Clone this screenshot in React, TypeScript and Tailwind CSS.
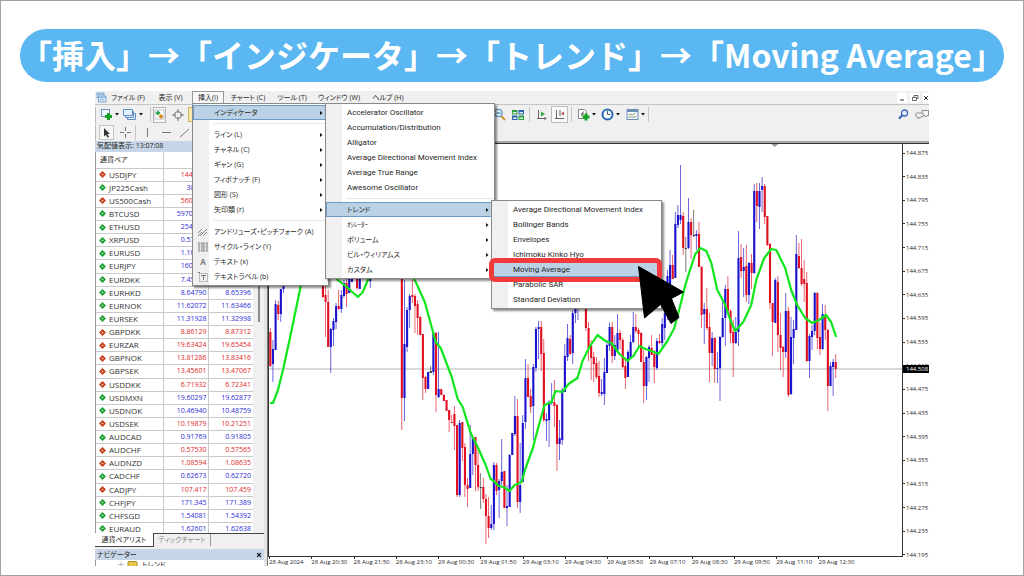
import React from 'react';
import { X } from 'lucide-react';

interface Quote {
  symbol: string;
  bid: string;
  ask: string;
  up: boolean;
}

interface MenuEntry {
  label: string;
  arrow?: boolean;
  active?: boolean;
  icon?: React.ReactNode;
  submenu?: React.ReactNode;
}

const quotes: Quote[] = [
  { symbol: 'USDJPY', bid: '144.508', ask: '144.524', up: false },
  { symbol: 'JP225Cash', bid: '38190', ask: '38200', up: true },
  { symbol: 'US500Cash', bid: '5600.10', ask: '5600.80', up: false },
  { symbol: 'BTCUSD', bid: '59702.10', ask: '59760.20', up: true },
  { symbol: 'ETHUSD', bid: '2540.10', ask: '2543.60', up: true },
  { symbol: 'XRPUSD', bid: '0.57120', ask: '0.57410', up: true },
  { symbol: 'EURUSD', bid: '1.10890', ask: '1.10907', up: true },
  { symbol: 'EURJPY', bid: '160.230', ask: '160.254', up: true },
  { symbol: 'EURDKK', bid: '7.45210', ask: '7.46240', up: true },
  { symbol: 'EURHKD', bid: '8.64790', ask: '8.65396', up: true },
  { symbol: 'EURNOK', bid: '11.62072', ask: '11.63466', up: true },
  { symbol: 'EURSEK', bid: '11.31928', ask: '11.32998', up: true },
  { symbol: 'GBPDKK', bid: '8.86129', ask: '8.87312', up: false },
  { symbol: 'EURZAR', bid: '19.63424', ask: '19.65454', up: false },
  { symbol: 'GBPNOK', bid: '13.81286', ask: '13.83416', up: false },
  { symbol: 'GBPSEK', bid: '13.45601', ask: '13.47067', up: false },
  { symbol: 'USDDKK', bid: '6.71932', ask: '6.72341', up: false },
  { symbol: 'USDMXN', bid: '19.60297', ask: '19.62877', up: true },
  { symbol: 'USDNOK', bid: '10.46940', ask: '10.48759', up: true },
  { symbol: 'USDSEK', bid: '10.19879', ask: '10.21251', up: false },
  { symbol: 'AUDCAD', bid: '0.91769', ask: '0.91805', up: true },
  { symbol: 'AUDCHF', bid: '0.57530', ask: '0.57565', up: false },
  { symbol: 'AUDNZD', bid: '1.08594', ask: '1.08635', up: false },
  { symbol: 'CADCHF', bid: '0.62673', ask: '0.62720', up: true },
  { symbol: 'CADJPY', bid: '107.417', ask: '107.459', up: false },
  { symbol: 'CHFJPY', bid: '171.345', ask: '171.389', up: true },
  { symbol: 'CHFSGD', bid: '1.54081', ask: '1.54392', up: true },
  { symbol: 'EURAUD', bid: '1.62601', ask: '1.62638', up: true },
];

const prices = [
  '144.875', '144.835', '144.795', '144.755', '144.715', '144.675', '144.635', '144.595', '144.555',
  '144.515', '144.475', '144.435', '144.395', '144.355', '144.315', '144.275', '144.235', '144.195',
];

const times = [
  '28 Aug 2024', '28 Aug 20:30', '28 Aug 21:50', '28 Aug 23:10', '29 Aug 00:30', '29 Aug 01:50', '29 Aug 03:10',
  '29 Aug 04:30', '29 Aug 05:50', '29 Aug 07:10', '29 Aug 08:30', '29 Aug 09:50', '29 Aug 11:10', '29 Aug 12:30',
];

// bar index, high, body top, body bottom, low, colour (r = down, b = up, k = flat)
type Candle = [number, number, number, number, number, 'r' | 'b' | 'k'];

const candles: Candle[] = [
  [0, 328, 332, 366, 367, 'r'], [1, 340, 349, 364, 382, 'b'], [2, 300, 304, 350, 350, 'b'], [3, 301, 305, 314, 320, 'r'],
  [4, 289, 289, 314, 322, 'b'], [5, 270, 280, 289, 293, 'b'],
  [20, 270, 270, 297, 298, 'r'], [21, 286, 295, 302, 337, 'r'], [22, 290, 302, 347, 347, 'r'], [23, 328, 329, 347, 373, 'b'],
  [24, 318, 321, 330, 346, 'b'], [25, 303, 306, 322, 329, 'b'], [26, 290, 306, 309, 310, 'r'], [27, 290, 295, 309, 313, 'b'],
  [28, 280, 283, 296, 298, 'b'], [29, 278, 283, 294, 307, 'r'], [30, 270, 275, 293, 293, 'b'], [31, 268, 270, 282, 282, 'b'],
  [33, 270, 270, 288, 290, 'r'], [34, 270, 275, 289, 289, 'b'], [38, 268, 270, 281, 288, 'b'], [50, 268, 270, 398, 430, 'r'],
  [51, 280, 344, 398, 421, 'b'], [52, 307, 310, 347, 352, 'b'], [53, 294, 296, 310, 328, 'b'], [54, 280, 295, 297, 303, 'r'],
  [55, 294, 296, 306, 333, 'r'], [56, 300, 304, 318, 335, 'r'], [57, 316, 317, 335, 335, 'r'], [58, 334, 334, 378, 400, 'r'],
  [59, 376, 377, 389, 393, 'r'], [60, 372, 372, 389, 389, 'b'], [61, 366, 371, 373, 373, 'k'], [62, 332, 333, 372, 375, 'b'],
  [63, 332, 333, 395, 412, 'r'], [64, 332, 389, 397, 398, 'b'], [65, 389, 389, 395, 395, 'r'], [66, 394, 395, 401, 401, 'r'],
  [67, 400, 400, 411, 411, 'r'], [68, 410, 410, 420, 432, 'r'], [69, 415, 422, 423, 423, 'r'], [70, 406, 414, 426, 450, 'r'],
  [71, 425, 425, 495, 497, 'r'], [72, 420, 423, 495, 497, 'b'], [73, 422, 422, 448, 461, 'r'], [74, 443, 447, 485, 497, 'r'],
  [75, 478, 485, 489, 507, 'r'], [76, 425, 454, 488, 488, 'b'], [77, 436, 437, 454, 475, 'b'], [78, 437, 437, 465, 491, 'r'],
  [79, 450, 465, 487, 491, 'r'], [80, 473, 487, 488, 509, 'k'], [81, 478, 487, 499, 503, 'r'], [82, 494, 499, 516, 544, 'r'],
  [83, 497, 516, 528, 538, 'r'], [84, 505, 524, 528, 530, 'b'], [85, 462, 465, 524, 530, 'b'], [86, 463, 465, 491, 495, 'r'],
  [87, 479, 481, 490, 518, 'b'], [88, 439, 472, 481, 485, 'b'], [89, 471, 471, 508, 508, 'r'], [90, 485, 506, 508, 526, 'b'],
  [91, 454, 455, 507, 507, 'b'], [92, 433, 433, 455, 455, 'b'], [93, 396, 416, 434, 436, 'b'], [94, 399, 416, 502, 508, 'r'],
  [95, 443, 485, 502, 513, 'b'], [96, 415, 423, 482, 482, 'b'], [97, 359, 378, 422, 429, 'b'], [98, 364, 378, 397, 397, 'r'],
  [99, 389, 396, 407, 413, 'r'], [100, 364, 367, 406, 440, 'b'], [101, 327, 329, 368, 372, 'b'], [102, 321, 327, 329, 359, 'b'],
  [103, 321, 327, 354, 371, 'r'], [104, 339, 353, 420, 422, 'r'], [105, 413, 419, 421, 441, 'b'], [106, 400, 402, 420, 447, 'b'],
  [107, 383, 401, 403, 405, 'b'], [108, 380, 402, 406, 427, 'r'], [109, 404, 405, 444, 471, 'r'], [110, 420, 438, 444, 460, 'b'],
  [111, 388, 390, 440, 445, 'b'], [112, 344, 356, 392, 392, 'b'], [113, 324, 338, 357, 361, 'b'], [114, 335, 339, 354, 355, 'r'],
  [115, 310, 313, 353, 364, 'b'], [116, 302, 308, 313, 323, 'b'], [117, 298, 300, 308, 320, 'b'], [120, 298, 300, 328, 331, 'r'],
  [121, 322, 328, 348, 361, 'r'], [122, 340, 346, 358, 380, 'r'], [123, 352, 357, 364, 382, 'r'], [124, 357, 363, 377, 379, 'r'],
  [125, 361, 376, 393, 397, 'r'], [126, 379, 392, 394, 396, 'b'], [127, 358, 372, 394, 405, 'b'], [128, 340, 345, 373, 373, 'b'],
  [129, 323, 327, 346, 351, 'b'], [130, 322, 327, 356, 363, 'r'], [131, 335, 345, 356, 360, 'b'], [132, 314, 333, 350, 351, 'b'],
  [133, 330, 333, 340, 349, 'r'], [134, 338, 340, 367, 368, 'r'], [135, 357, 366, 378, 389, 'r'], [136, 350, 352, 377, 377, 'b'],
  [137, 335, 342, 358, 358, 'b'], [138, 312, 327, 342, 343, 'b'], [139, 314, 327, 331, 333, 'r'], [140, 328, 330, 334, 349, 'r'],
  [141, 332, 333, 362, 362, 'r'], [142, 350, 362, 386, 403, 'r'], [143, 356, 357, 386, 400, 'b'], [144, 345, 347, 358, 382, 'b'],
  [145, 335, 348, 355, 355, 'r'], [146, 350, 354, 367, 383, 'r'], [147, 338, 341, 368, 370, 'b'], [148, 334, 341, 343, 344, 'r'],
  [149, 318, 324, 343, 347, 'b'], [150, 310, 313, 328, 340, 'b'], [151, 270, 276, 315, 320, 'b'], [152, 250, 265, 286, 290, 'b'],
  [153, 255, 265, 279, 279, 'r'], [154, 212, 224, 278, 278, 'b'], [155, 205, 215, 225, 228, 'b'], [156, 165, 215, 220, 224, 'b'],
  [157, 212, 216, 248, 255, 'r'], [158, 237, 248, 249, 272, 'k'], [159, 198, 222, 248, 249, 'b'], [160, 218, 222, 235, 259, 'r'],
  [161, 210, 235, 236, 237, 'k'], [162, 230, 234, 236, 250, 'b'], [163, 222, 234, 267, 267, 'r'], [164, 266, 267, 315, 328, 'r'],
  [165, 303, 309, 314, 344, 'b'], [166, 288, 309, 328, 330, 'r'], [167, 313, 327, 353, 382, 'r'], [168, 332, 338, 353, 366, 'b'],
  [169, 337, 338, 369, 383, 'r'], [170, 352, 368, 369, 383, 'b'], [171, 336, 337, 368, 401, 'b'], [172, 300, 318, 337, 338, 'b'],
  [173, 285, 289, 318, 346, 'b'], [174, 276, 289, 311, 312, 'r'], [175, 309, 311, 333, 343, 'r'], [176, 320, 332, 343, 377, 'r'],
  [177, 317, 332, 343, 344, 'b'], [178, 231, 258, 332, 346, 'b'], [179, 244, 257, 271, 278, 'r'], [180, 248, 267, 271, 297, 'b'],
  [181, 245, 266, 295, 302, 'r'], [182, 262, 263, 295, 304, 'b'], [183, 254, 263, 273, 289, 'r'], [184, 184, 191, 273, 274, 'b'],
  [185, 183, 191, 206, 222, 'r'], [186, 183, 191, 207, 229, 'b'], [187, 177, 186, 190, 212, 'b'], [188, 184, 186, 217, 224, 'r'],
  [189, 216, 216, 245, 246, 'r'], [190, 243, 244, 303, 309, 'r'], [191, 303, 303, 322, 356, 'r'], [192, 278, 280, 323, 323, 'b'],
  [193, 276, 282, 335, 352, 'r'], [194, 313, 335, 348, 370, 'r'], [195, 346, 347, 352, 377, 'r'], [196, 293, 311, 352, 358, 'b'],
  [197, 307, 311, 395, 397, 'r'], [198, 317, 337, 394, 395, 'b'], [199, 320, 329, 338, 364, 'b'], [200, 235, 254, 330, 330, 'b'],
  [201, 243, 256, 268, 269, 'r'], [202, 239, 268, 284, 286, 'r'], [203, 260, 279, 284, 302, 'r'], [204, 272, 283, 361, 362, 'r'],
  [205, 334, 336, 361, 378, 'b'], [206, 325, 331, 337, 350, 'b'], [207, 292, 293, 331, 335, 'b'], [208, 292, 293, 338, 349, 'r'],
  [209, 322, 337, 349, 355, 'r'], [210, 304, 314, 349, 350, 'b'], [211, 305, 315, 330, 340, 'r'], [212, 329, 330, 386, 411, 'r'],
  [213, 362, 366, 386, 386, 'b'], [214, 359, 362, 367, 396, 'b'], [215, 354, 362, 369, 378, 'r'],
];

const candleColor = { r: '#e01020', b: '#1a12cc', k: '#333333' };

const movingAverage =
  '270,403 273,403 278,390 283,370 290,338 301,285 308,255 320,250 330,270 338,280 348,288 358,297 363,292 368,280 372,270 385,240 400,255 409,270 416,282 425,302 436,342 441,348 452,377 458,399 463,407 471,433 478,447 486,465 491,479 494,481 499,486 504,487 510,491 515,485 522,482 526,468 533,449 538,430 545,405 552,402 556,391 563,392 569,384 578,378 583,361 590,347 598,335 606,341 612,343 620,354 628,361 634,356 640,346 646,349 652,351 659,354 668,341 675,328 681,305 686,285 690,272 696,254 701,248 707,251 712,263 718,290 726,305 731,320 736,331 744,322 752,305 757,280 765,258 772,249 777,250 786,268 792,290 798,305 806,318 813,323 820,320 827,315 832,322 837,337';

function Chart() {
  return (
    <svg className="block h-[412px] w-full" viewBox="269 144 634 412" preserveAspectRatio="none" aria-label="USDJPY">
      <line x1="269" x2="903" y1="369" y2="369" stroke="#b4b4b4" strokeWidth="1" />
      <path d="M772 144h7l-3.500 3z" fill="#999" />
      {candles.map(([i, high, top, bottom, low, c]) => {
        const x = 270.3 + i * 2.634;
        return (
          <g key={i} fill={candleColor[c]}>
            <rect x={x - 0.4} y={high} width={0.8} height={Math.max(low - high, 1)} opacity={0.8} />
            <rect x={x - 1} y={top} width={2.1} height={Math.max(bottom - top, 1)} />
          </g>
        );
      })}
      <polyline points={movingAverage} fill="none" stroke="#10e61c" strokeWidth="2.2" strokeLinejoin="round" />
    </svg>
  );
}

const isLatin = (text: string) => /^[\x20-\x7e]+$/.test(text);

function Menu({ groups, className }: { groups: MenuEntry[][]; className: string }) {
  return (
    <ul
      role="menu"
      className={`absolute z-10 border border-[#8a8a8a] bg-[linear-gradient(to_right,#f0f0f0_16px,#ffffff_16px)] py-px shadow-[2px_2px_2px_rgba(0,0,0,0.45)] ${className}`}
    >
      {groups.map((group, g) => (
        <React.Fragment key={g}>
          {g > 0 && (
            <li role="separator" className="flex h-[7px] items-center pl-5">
              <span className="h-px w-full bg-[#e6e6e6]" />
            </li>
          )}
          {group.map((entry) => (
            <li key={entry.label} role="none" className="relative">
              <button
                role="menuitem"
                className={`flex h-[15px] w-full items-center border text-left whitespace-nowrap ${
                  entry.active ? 'border-[#6b9ac4] bg-[#bbd2e6]' : 'border-transparent'
                }`}
              >
                <span className="flex w-[20px] shrink-0 pl-1">{entry.icon}</span>
                <span className={`flex-1 ${isLatin(entry.label) ? "font-['Roboto',sans-serif] text-[8px]" : ''}`}>
                  {entry.label}
                </span>
                {entry.arrow && (
                  <svg className="mr-[4px] h-[4px] w-[3px]" viewBox="0 0 3 4">
                    <path d="M0 0l2.500 2-2.500 2z" fill="#111" />
                  </svg>
                )}
              </button>
              {entry.submenu}
            </li>
          ))}
        </React.Fragment>
      ))}
    </ul>
  );
}

const trendMenu = (
  <Menu
    className="-top-[2px] left-[165px] w-[171px]"
    groups={[
      [
        { label: 'Average Directional Movement Index' },
        { label: 'Bollinger Bands' },
        { label: 'Envelopes' },
        { label: 'Ichimoku Kinko Hyo' },
        { label: 'Moving Average', active: true, submenu: <Highlight /> },
        { label: 'Parabolic SAR' },
        { label: 'Standard Deviation' },
      ],
    ]}
  />
);

function Highlight() {
  return (
    <>
      <span className="pointer-events-none absolute -top-[4px] -right-px -left-[3px] z-20 h-[24px] rounded-md border-[5px] border-[#f23a3a]" />
      <svg className="pointer-events-none absolute top-[3px] left-[145px] z-30 h-[60px] w-[48px]" viewBox="637 265 48 60">
        <path
          d="M638.500 266.500L683.500 292 671.500 298.500 679 317.500 671 323.500 660.500 304.500 644.500 318z"
          fill="#000"
          stroke="#000"
          strokeLinejoin="round"
        />
      </svg>
    </>
  );
}

const indicatorMenu = (
  <Menu
    className="-top-[2px] left-[132px] w-[170px]"
    groups={[
      [
        { label: 'Accelerator Oscillator' },
        { label: 'Accumulation/Distribution' },
        { label: 'Alligator' },
        { label: 'Average Directional Movement Index' },
        { label: 'Average True Range' },
        { label: 'Awesome Oscillator' },
      ],
      [
        { label: 'トレンド', arrow: true, active: true, submenu: trendMenu },
        { label: 'ｵｼﾚｰﾀｰ', arrow: true },
        { label: 'ボリューム', arrow: true },
        { label: 'ビル・ウィリアムス', arrow: true },
        { label: 'カスタム', arrow: true },
      ],
    ]}
  />
);

const insertMenu = (
  <Menu
    className="top-[11px] -left-px w-[137px]"
    groups={[
      [{ label: 'インディケータ', arrow: true, active: true, submenu: indicatorMenu }],
      [
        { label: 'ライン (L)', arrow: true },
        { label: 'チャネル (C)', arrow: true },
        { label: 'ギャン (G)', arrow: true },
        { label: 'フィボナッチ (F)', arrow: true },
        { label: '図形 (S)', arrow: true },
        { label: '矢印類 (r)', arrow: true },
      ],
      [
        {
          label: 'アンドリューズ・ピッチフォーク (A)',
          icon: (
            <svg className="size-[10px]" viewBox="0 0 10 10" stroke="#888" fill="none">
              <path d="M0 6l4-4M2 9l7-7M5 9l4-4M0 9l4-4" />
            </svg>
          ),
        },
        {
          label: 'サイクル・ライン (Y)',
          icon: (
            <svg className="size-[10px]" viewBox="0 0 10 10" stroke="#777" fill="none">
              <path d="M1 0v10M4 0v10M6 0v10M9 0v10" />
              <path d="M1 1.500h3M1 5h3M1 8.500h3M6 1.500h3M6 5h3M6 8.500h3" stroke="#bbb" />
            </svg>
          ),
        },
        { label: 'テキスト (x)', icon: <span className="w-[10px] text-center text-[8px] font-bold text-[#777]">A</span> },
        {
          label: 'テキストラベル (b)',
          icon: (
            <svg className="size-[10px]" viewBox="0 0 10 10" stroke="#777" fill="none">
              <rect x="1.500" y="1.500" width="8" height="8" stroke="#bbb" />
              <path d="M3 3.500h5M5.500 3.500V8M0 0.500h2" />
            </svg>
          ),
        },
      ],
    ]}
  />
);

function Caret() {
  return (
    <svg className="h-[3px] w-[4px] shrink-0" viewBox="0 0 4 3">
      <path d="M0 0h4l-2 2.500z" fill="#111" />
    </svg>
  );
}

function MenuBar() {
  return (
    <nav className="flex h-[14px] items-stretch border-b border-[#c4c4c4]">
      <svg className="ml-px h-[11px] w-[11px] self-center" viewBox="0 0 11 11" fill="#dcebfa" stroke="#6a9ad0" strokeWidth="0.8">
        <rect x="1" y="1" width="7" height="5" />
        <rect x="2.500" y="4" width="7.500" height="6" />
        <path d="M1 2.300h7M2.500 5.300h7.500M4 8l2-1 2 1.500" />
      </svg>
      <button className="w-[42px]">ファイル (F)</button>
      <button className="w-[43px]">表示 (V)</button>
      <div className="relative w-[32px]">
        <button className="h-[13px] w-full border border-b-0 border-[#9a9a9a] bg-[#f7f7f7]">挿入(I)</button>
        <div className="absolute top-px left-px">{insertMenu}</div>
      </div>
      <button className="w-[48px]">チャート (C)</button>
      <button className="w-[40px]">ツール (T)</button>
      <button className="w-[54px]">ウィンドウ (W)</button>
      <button className="w-[44px]">ヘルプ (H)</button>
      <div className="ml-auto flex items-center gap-[3px] overflow-hidden">
        <button aria-label="最小化" className="flex h-[10px] w-[10px] items-center justify-center bg-white">
          <svg className="size-[8px]" viewBox="0 0 8 8"><path d="M2 6h4" stroke="#333" /></svg>
        </button>
        <button aria-label="元に戻す" className="flex h-[10px] w-[10px] items-center justify-center bg-white">
          <svg className="size-[8px]" viewBox="0 0 8 8" fill="none" stroke="#444" strokeWidth="0.8">
            <path d="M3 3V1.500h4v3H5.500M1.500 3.500h4v3h-4z" />
          </svg>
        </button>
        <button aria-label="閉じる" className="flex h-[10px] w-[6px] items-center justify-center bg-white">
          <X className="size-[6px] shrink-0" strokeWidth={4} />
        </button>
      </div>
    </nav>
  );
}

function Divider() {
  return <span className="block h-[15px] w-px shrink-0 bg-[#c6c6c6]" />;
}

function Toolbar() {
  return (
    <div className="flex h-[19px] items-center">
      <div className="flex w-[97px] shrink-0 items-center overflow-hidden border-l border-[#bbb] pl-1">
        <button aria-label="新規チャート" className="flex items-center gap-[2px]">
          <svg className="size-[13px]" viewBox="0 0 13 13">
            <rect x="1.500" y="1.500" width="8" height="7" fill="#f2f8ff" stroke="#6d93bd" />
            <path d="M8.500 5v7M5 8.500h7" stroke="#15a321" strokeWidth="3" />
          </svg>
          <Caret />
        </button>
        <button aria-label="プロファイル" className="ml-[4px] flex items-center gap-[3px]">
          <svg className="size-[13px]" viewBox="0 0 13 13" fill="#e4f0fb" stroke="#5f8fc4">
            <path d="M4.500 5.500h8v6h-8z" />
            <path d="M2.500 3.500h8v6h-8z" />
            <path d="M0.500 1.500h9v6h-9z" />
          </svg>
          <Caret />
        </button>
        <span className="ml-[7px]"><Divider /></span>
        <button aria-label="気配値表示" className="ml-[2px] flex h-[16px] w-[15px] items-center justify-center border border-[#b5b5b5] bg-[#fafafa]">
          <svg className="size-[11px]" viewBox="0 0 11 11">
            <rect x="1" y="1" width="9" height="9" fill="#fff" stroke="#b5c4d0" />
            <path d="M4 1.500l2.500 2.500L4 6.500 1.500 4z" fill="#2da343" />
            <path d="M7 5l2.500 2.500L7 10 4.500 7.500z" fill="#d88820" />
          </svg>
        </button>
        <button aria-label="データウィンドウ" className="ml-[6px] shrink-0">
          <svg className="size-[12px]" viewBox="0 0 12 12" fill="none" stroke="#777">
            <circle cx="6" cy="6" r="3.500" />
            <path d="M6 0v4M6 8v4M0 6h4M8 6h4" />
          </svg>
        </button>
        <span className="ml-[4px] h-[15px] w-[12px] shrink-0 border border-[#d5b55a] bg-[#fbe9b0]" />
      </div>
      <div className="w-[301px] shrink-0" />
      <button aria-label="ズームアウト" className="shrink-0">
        <svg className="size-[13px]" viewBox="0 0 13 13" fill="none">
          <path d="M8 8l4 4" stroke="#c99a2a" strokeWidth="2" />
          <circle cx="5.500" cy="5" r="3.800" fill="#dceffc" stroke="#3e7fc2" />
          <path d="M3.500 5h4" stroke="#2a62a5" />
        </svg>
      </button>
      <button aria-label="タイル表示" className="ml-[6px] shrink-0">
        <svg className="size-[12px]" viewBox="0 0 12 12">
          <path d="M0 1h5.500v4.500H0zM6.500 6.500H12V11H6.500z" fill="#2f9e3c" />
          <path d="M6.500 1H12v4.500H6.500zM0 6.500h5.500V11H0z" fill="#2f62b5" />
          <path d="M1 3h3.500v1.500H1zM7.500 3H11v1.500H7.500zM1 8.500h3.500V10H1zM7.500 8.500H11V10H7.500z" fill="#dff3e0" />
        </svg>
      </button>
      <span className="ml-[5px]"><Divider /></span>
      <button aria-label="自動スクロール" className="ml-[6px] shrink-0">
        <svg className="size-[11px]" viewBox="0 0 11 11" fill="none" stroke="#666">
          <path d="M2.500 1v9M1 9.500h9M8.500 8l1.500 1.500-1.500 1.500" />
          <path d="M5 2.500v5l4-2.500z" fill="#2fae3d" stroke="none" />
        </svg>
      </button>
      <button aria-label="チャートシフト" className="ml-[4px] flex h-[17px] w-[17px] shrink-0 items-center justify-center border border-[#bdbdbd] bg-[#f8f8f8]">
        <svg className="size-[11px]" viewBox="0 0 11 11" fill="none" stroke="#666">
          <path d="M2.500 1v9M1 9.500h9M6 1v6" />
          <path d="M7 4.500l3-2v4z" fill="#c24a4a" stroke="none" />
        </svg>
      </button>
      <span className="ml-[3px]"><Divider /></span>
      <button aria-label="インディケータ" className="ml-[5px] flex shrink-0 items-center gap-[2px]">
        <svg className="size-[13px]" viewBox="0 0 13 13">
          <path d="M1.500 1.500h6l2 2v7h-8z" fill="#fff" stroke="#888" />
          <path d="M5 8c0-4 1-4 2-4M4 6h3" fill="none" stroke="#555" />
          <path d="M9 5.500v7M5.500 9H12.500" stroke="#15a321" strokeWidth="3" />
        </svg>
        <Caret />
      </button>
      <button aria-label="時間足" className="ml-[5px] flex shrink-0 items-center gap-[2px]">
        <svg className="size-[13px]" viewBox="0 0 13 13" fill="none">
          <circle cx="6.500" cy="6.500" r="5" fill="#f3f9ff" stroke="#2868b4" strokeWidth="2" />
          <path d="M6.500 3v3.500H9" stroke="#555" />
        </svg>
        <Caret />
      </button>
      <button aria-label="定型チャート" className="ml-[6px] flex shrink-0 items-center gap-[2px]">
        <svg className="size-[13px]" viewBox="0 0 13 13" fill="none" stroke="#6d8fb3">
          <rect x="1" y="1.500" width="11" height="10" fill="#f4f9fd" />
          <path d="M1 3h11" strokeWidth="2" />
          <path d="M2.500 7l2-1 2 1 3-2M2.500 9.500l3-1 2 1 3-1.500" stroke="#8a9a6a" />
        </svg>
        <Caret />
      </button>
      <span className="ml-[3px]"><Divider /></span>
      <button aria-label="検索" className="ml-auto shrink-0">
        <svg className="size-[11px]" viewBox="0 0 11 11" fill="none" stroke="#3c63b8">
          <circle cx="6.500" cy="4" r="3" fill="#eef4ff" strokeWidth="1.300" />
          <path d="M4.300 6.300L1 9.800" strokeWidth="2" />
        </svg>
      </button>
      <button aria-label="チャット" className="ml-[6px] shrink-0">
        <svg className="h-[11px] w-[14px]" viewBox="0 0 14 11" fill="#f3f3f3" stroke="#8c8c8c">
          <path d="M7 1.500h6.500v5H12l-1 1.500-1-1.500H7z" />
          <path d="M1.500 4h6c1 0 1 4 0 4H5L3 10V8H1.500c-1 0-1-4 0-4z" />
        </svg>
      </button>
    </div>
  );
}

function LineToolbar() {
  return (
    <div className="flex h-[17px] items-center border-l border-[#bbb] pl-[3px]">
      <button aria-label="カーソル" className="flex h-[15px] w-[15px] items-center justify-center border border-[#c4c4c4] bg-[#f7f7f7]">
        <svg className="h-[10px] w-[8px]" viewBox="0 0 8 10">
          <path d="M1 0l6 6H4.500L6 9 4.500 9.800 3 6.800 1 8.500z" fill="#333" />
        </svg>
      </button>
      <button aria-label="クロスヘア" className="ml-[6px]">
        <svg className="size-[11px]" viewBox="0 0 11 11" stroke="#777"><path d="M5.500 0v4M5.500 7v4M0 5.500h4M7 5.500h4" /></svg>
      </button>
      <span className="ml-[4px]"><Divider /></span>
      <button aria-label="垂直線" className="ml-[6px]">
        <svg className="size-[11px]" viewBox="0 0 11 11" stroke="#777"><path d="M5.500 1v9" /></svg>
      </button>
      <button aria-label="水平線" className="ml-[8px]">
        <svg className="size-[11px]" viewBox="0 0 11 11" stroke="#777"><path d="M1 5.500h9" /></svg>
      </button>
      <button aria-label="トレンドライン" className="ml-[7px]">
        <svg className="size-[11px]" viewBox="0 0 11 11" stroke="#777"><path d="M1 10l9-8" /></svg>
      </button>
    </div>
  );
}

function MarketWatch() {
  return (
    <aside className="flex w-[169px] shrink-0 flex-col">
      <h2 className="h-[11px] bg-[#c6d6e6] pl-[2px] leading-[10px]">気配値表示: 13:07:08</h2>
      <div className="flex h-[381px]">
        <div className="min-w-0 flex-1 overflow-hidden border-l border-[#999] bg-white">
          <table className="h-[384px] w-full table-fixed border-collapse">
            <thead>
              <tr className="h-[16px] border-b border-[#c9c9c9]">
                <th className="w-[67px] border-r border-[#c9c9c9] pl-[4px] text-left font-normal">通貨ペア</th>
                <th className="w-[45px] border-r border-[#c9c9c9]" />
                <th />
              </tr>
            </thead>
            <tbody>
              {quotes.map((q) => (
                <tr key={q.symbol} className="border-b border-[#c9c9c9]">
                  <td className="border-r border-[#c9c9c9] p-0 pl-[3px]">
                    <span className="flex items-center gap-[3px] text-[8px] leading-[10px] text-[#333]">
                      <svg className="size-[7px]" viewBox="0 0 7 7">
                        <path d="M3.500 0L7 3.500 3.500 7 0 3.500z" fill={q.up ? '#23a03a' : '#c8421c'} />
                        <path d={q.up ? 'M2.500 4l1-1.500 1 1.500z' : 'M2.500 3l1 1.500 1-1.500z'} fill="#e8f4e4" />
                      </svg>
                      {q.symbol}
                    </span>
                  </td>
                  <td className={`border-r border-[#c9c9c9] p-0 pr-px text-right leading-[10px] ${q.up ? 'text-[#2c2cd6]' : 'text-[#e02828]'}`}>
                    {q.bid}
                  </td>
                  <td className={`p-0 pr-[2px] text-right leading-[10px] ${q.up ? 'text-[#2c2cd6]' : 'text-[#e02828]'}`}>{q.ask}</td>
                </tr>
              ))}
            </tbody>
          </table>
        </div>
        <div className="flex w-[11px] justify-center bg-[#f0f0f0]">
          <span className="h-[170px] w-[2px] bg-[#8c8c8c]" />
        </div>
      </div>
      <div className="flex h-[16px] border-t border-[#444]">
        <button className="-mt-px h-[14px] w-[59px] border-r border-b border-[#444] bg-white">通貨ペアリスト</button>
        <button className="h-[12px] w-[57px] border-r border-[#999] text-[#888]">ティックチャート</button>
      </div>
      <div className="flex h-[11px] items-center justify-between bg-[#c6d6e6] px-[2px]">
        <h2 className="leading-[10px]">ナビゲーター</h2>
        <button aria-label="閉じる"><X className="size-[6px]" strokeWidth={5} /></button>
      </div>
      <div className="flex h-[6px] overflow-hidden border-l border-[#999] bg-white pl-[22px] leading-[10px]">
        <svg className="h-[8px] w-[20px]" viewBox="0 0 20 8">
          <path d="M0 4.500h6M3 2v6" stroke="#bbb" />
          <rect x="10" y="1.500" width="9" height="7" rx="1" fill="#e8c84a" stroke="#a98b26" />
        </svg>
        <span className="pl-[4px]">トレンド</span>
      </div>
    </aside>
  );
}

function ChartPane() {
  return (
    <section className="flex min-w-0 flex-1 flex-col border-t-2 border-[#a8a8a8] bg-white">
      <div className="flex border-t border-l border-[#333]">
        <div className="min-w-0 flex-1 border-r border-b border-[#333]">
          <Chart />
        </div>
        <div className="relative -mb-[2px] flex w-[26px] shrink-0 flex-col justify-between pt-[5px] text-[6px] leading-[8px]">
          {prices.map((p) => (
            <span key={p} className="flex items-center gap-px">
              <span className="h-px w-[2px] bg-[#333]" />
              {p}
            </span>
          ))}
          <span className="absolute top-[221px] right-0 left-0 bg-black pl-[3px] leading-[8px] text-white">144.508</span>
        </div>
      </div>
      <div className="mr-[26px] grid h-[9px] grid-cols-[repeat(15,minmax(0,1fr))] pl-px text-[6px] leading-[11px] whitespace-nowrap">
        {times.map((t) => (
          <span key={t} className="bg-[linear-gradient(#333,#333)] bg-[length:1px_2px] bg-left-top bg-no-repeat">{t}</span>
        ))}
      </div>
    </section>
  );
}

export default function App() {
  return (
    <main className="min-h-screen border border-[#a3a3a3] bg-white pb-[9px] font-['Open_Sans','Noto_Sans_CJK_JP',sans-serif] text-[#1f1f1f]">
      <h1 className="mx-[19px] mt-[28px] flex h-[53px] items-center justify-center rounded-full bg-[#5bb7f1] pb-[4px] font-['Noto_Sans_CJK_JP',sans-serif] text-[32px] leading-[40px] font-bold whitespace-nowrap text-white">
        「挿入」→「インジケータ」→「トレンド」→「Moving Average」
      </h1>
      <div className="mx-[94px] mt-[9px] bg-[#f0f0f0] text-[7px] leading-[10px] [font-feature-settings:'palt']">
        <MenuBar />
        <Toolbar />
        <LineToolbar />
        <div className="flex">
          <MarketWatch />
          <div className="w-[4px] shrink-0 border-r border-[#777] bg-[#e4e4e4]" />
          <ChartPane />
        </div>
      </div>
    </main>
  );
}
